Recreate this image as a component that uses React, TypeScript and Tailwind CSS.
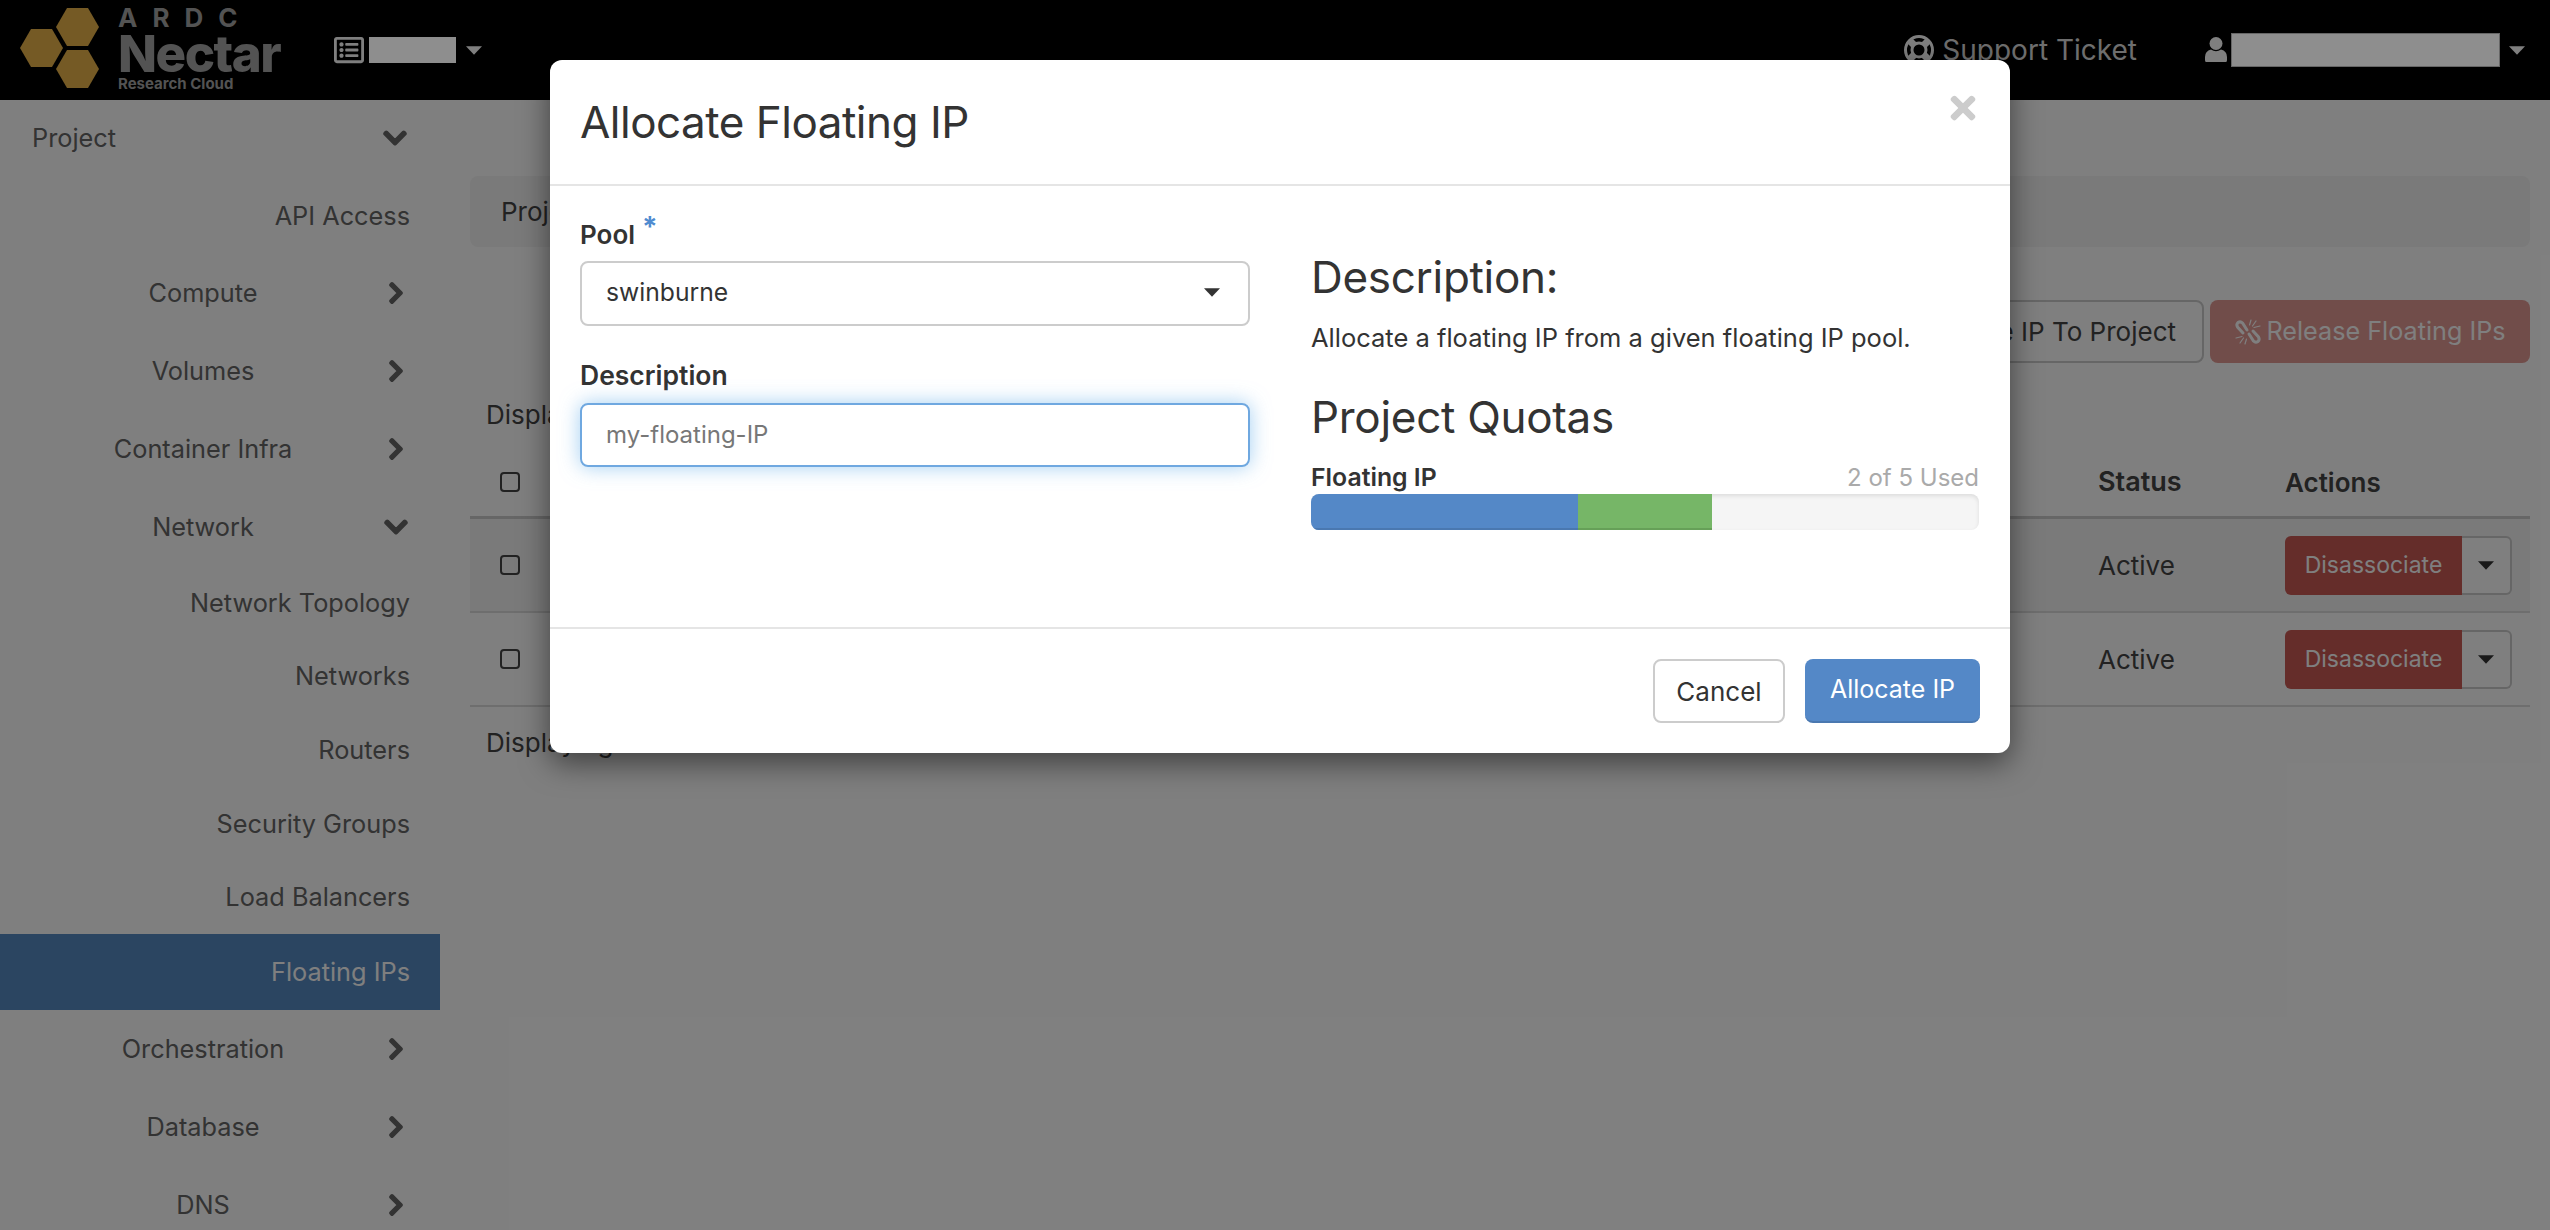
import { FaChevronDown, FaChevronRight, FaRegListAlt, FaTimes } from 'react-icons/fa';

type NavItem = { label: string; h: string; arrow?: 'down' | 'right'; active?: boolean };

const NAV: NavItem[] = [
  { label: 'API Access', h: 'h-[76px]' },
  { label: 'Compute', h: 'h-[78px]', arrow: 'right' },
  { label: 'Volumes', h: 'h-[78px]', arrow: 'right' },
  { label: 'Container Infra', h: 'h-[78px]', arrow: 'right' },
  { label: 'Network', h: 'h-[78px]', arrow: 'down' },
  { label: 'Network Topology', h: 'h-[73.6px]' },
  { label: 'Networks', h: 'h-[73.6px]' },
  { label: 'Routers', h: 'h-[73.6px]' },
  { label: 'Security Groups', h: 'h-[73.6px]' },
  { label: 'Load Balancers', h: 'h-[73.6px]' },
  { label: 'Floating IPs', h: 'h-[76px]', active: true },
  { label: 'Orchestration', h: 'h-[78px]', arrow: 'right' },
  { label: 'Database', h: 'h-[78px]', arrow: 'right' },
  { label: 'DNS', h: 'h-[78px]', arrow: 'right' },
];

function Caret({ className }: { className: string }) {
  return (
    <svg viewBox="0 0 22 12" className={className} fill="currentColor">
      <polygon points="0,0 22,0 11,12" />
    </svg>
  );
}

function LifeRing() {
  return (
    <svg width="30" height="30" viewBox="0 0 30 30" fill="none" stroke="#fff">
      <circle cx="15" cy="15" r="13.5" strokeWidth="3" />
      <circle cx="15" cy="15" r="7" strokeWidth="3" />
      <g strokeWidth="7">
        <path d="M6 6 L10 10" />
        <path d="M24 6 L20 10" />
        <path d="M6 24 L10 20" />
        <path d="M24 24 L20 20" />
      </g>
    </svg>
  );
}

function UserIcon() {
  return (
    <svg width="22" height="26" viewBox="0 0 22 26" fill="#fff">
      <ellipse cx="11" cy="6.5" rx="6.5" ry="6.5" />
      <path d="M1 25 Q0 25 0 23 L0 20 Q0 14 6 12.5 Q11 16 16 12.5 Q22 14 22 20 L22 23 Q22 25 21 25 Z" />
    </svg>
  );
}

function BrokenLink() {
  return (
    <svg width="28" height="28" viewBox="0 0 28 28" fill="none" stroke="currentColor" strokeLinecap="round">
      <path d="M13 12 L8.5 5 Q6.5 3 4 4.5 Q2 6.5 3.5 9 L9 15" strokeWidth="3" />
      <path d="M15 16 L19.5 23 Q21.5 25 24 23.5 Q26 21.5 24.5 19 L19 13" strokeWidth="3" />
      <g strokeWidth="1.2">
        <path d="M17 2 L15.5 7" />
        <path d="M22 3 L18.5 8" />
        <path d="M26 8 L20 9.5" />
        <path d="M2 20 L8 18.5" />
        <path d="M6 25 L9.5 20" />
        <path d="M11 26 L12.5 21" />
      </g>
    </svg>
  );
}

function Logo() {
  return (
    <div className="flex items-start">
      <svg width="80" height="80" viewBox="0 0 80 80" className="ml-[20px] mt-[8px] shrink-0" fill="#eab44a">
        <polygon points="36,19 47,0 68,0 79,19 68,38 47,38" />
        <polygon points="0,40 11,21 32,21 43,40 32,59 11,59" />
        <polygon points="36,61 47,42 68,42 79,61 68,80 47,80" />
      </svg>
      <div className="ml-[18px] flex flex-col text-[#a6a6a6]">
        <div className="mt-[5px] h-[26px] text-[26px] font-bold leading-[26px] tracking-[15px]">ARDC</div>
        <div className="h-[46px] text-[51px] font-extrabold leading-[46px] tracking-[-1.5px]">Nectar</div>
        <div className="text-[15px] font-bold leading-[14px]">Research Cloud</div>
      </div>
    </div>
  );
}

function Navbar() {
  return (
    <div className="flex h-[100px] items-center bg-black">
      <div className="h-[100px] w-[334px] shrink-0">
        <Logo />
      </div>
      <FaRegListAlt className="text-[30px] text-white" />
      <div className="relative z-10 ml-[5px] h-[26px] w-[87px] bg-[#8e8e8e]" />
      <Caret className="ml-[10px] h-[9px] w-[16px] text-white" />
      <div className="flex-1" />
      <LifeRing />
      <span className="ml-[8px] text-[28px] text-[#dcdcdc]">Support Ticket</span>
      <div className="ml-[68px]">
        <UserIcon />
      </div>
      <div className="relative z-10 ml-[4px] h-[34px] w-[269px] border border-[#666] bg-[#8e8e8e]" />
      <Caret className="ml-[9px] mr-[25px] h-[9px] w-[16px] text-white" />
    </div>
  );
}

function Sidebar() {
  return (
    <div className="w-[440px] shrink-0 text-[25.3px] text-[#666]">
      <div className="flex h-[76px] items-center justify-between pl-[32px] pr-[32px]">
        <span>Project</span>
        <FaChevronDown className="text-[26px]" stroke="currentColor" strokeWidth={30} />
      </div>
      <div className="h-[2px]" />
      {NAV.map((item) => (
        <div key={item.label} className={item.h + ' flex items-center ' + (item.active ? 'bg-[#568ac2] text-white' : '')}>
          {item.arrow ? (
            <>
              <span className="w-[406px] text-center">{item.label}</span>
              <span className="-ml-[18px] flex w-[16px] justify-center">
                {item.arrow === 'down' ? (
                  <FaChevronDown className="shrink-0 text-[26px]" stroke="currentColor" strokeWidth={30} />
                ) : (
                  <FaChevronRight className="shrink-0 text-[24px]" stroke="currentColor" strokeWidth={30} />
                )}
              </span>
            </>
          ) : (
            <span className="w-[410px] text-right">{item.label}</span>
          )}
        </div>
      ))}
    </div>
  );
}

function Checkbox() {
  return <div className="h-[20px] w-[20px] rounded-[4px] border-2 border-[#444]" />;
}

function Row({ shaded }: { shaded?: boolean }) {
  return (
    <div className={'flex h-[94px] items-center border-b-2 border-[#ddd] ' + (shaded ? 'bg-[#f5f5f5]' : '')}>
      <div className="flex-1 pl-[30px]">
        <Checkbox />
      </div>
      <div className="w-[187px] text-[#444]">Active</div>
      <div className="flex w-[245px] items-center">
        <div className="flex h-[59px] w-[177px] items-center justify-center rounded-l-[6px] bg-[#ca5a54] text-[23px] text-white">
          Disassociate
        </div>
        <div className="flex h-[59px] w-[50px] items-center justify-center rounded-r-[6px] border-2 border-l-0 border-[#ccc] bg-white">
          <Caret className="h-[9px] w-[16px] text-[#333]" />
        </div>
      </div>
    </div>
  );
}

function Content() {
  return (
    <div className="w-[2090px] pl-[30px] text-[26px]">
      <div className="mt-[76px] flex h-[71px] w-[2060px] items-center rounded-[8px] bg-[#f5f5f5] pl-[31px] text-[#444]">Project</div>
      <div className="mt-[53px] flex w-[2060px] justify-end gap-[6px]">
        <div className="flex h-[63px] items-center rounded-[8px] border-2 border-[#ccc] bg-white px-[26px] text-[#444]">Allocate IP To Project</div>
        <div className="flex h-[63px] w-[320px] items-center justify-center gap-[4px] rounded-[8px] bg-[#e39a94] text-[25.2px] text-white">
          <BrokenLink />
          <span>Release Floating IPs</span>
        </div>
      </div>
      <div className="mt-[36px] pl-[16px] leading-[32px] text-[#444]">Displaying 2 items</div>
      <div className="mt-[17px] flex h-[71px] w-[2060px] items-center border-b-[3px] border-[#ccc] font-semibold text-[#444]">
        <div className="flex-1 pl-[30px]">
          <Checkbox />
        </div>
        <div className="w-[187px] text-[27px]">Status</div>
        <div className="w-[245px]">Actions</div>
      </div>
      <div className="w-[2060px]">
        <Row shaded />
        <Row />
      </div>
      <div className="mt-[20px] pl-[16px] leading-[32px] text-[#444]">Displaying 2 items</div>
    </div>
  );
}

function AllocateModal() {
  return (
    <div className="absolute left-[550px] top-[60px] z-20 flex h-[693px] w-[1460px] flex-col rounded-[12px] bg-white text-[#333] shadow-[0_10px_30px_rgba(0,0,0,0.5)]">
      <div className="relative flex h-[126px] items-center border-b-2 border-[#e5e5e5] pl-[30px]">
        <h4 className="text-[44px] leading-none tracking-[-0.5px]">Allocate Floating IP</h4>
        <FaTimes className="absolute right-[29px] top-[30px] text-[36px] text-[#ccc]" />
      </div>
      <div className="flex h-[443px] border-b-2 border-[#e5e5e5] pl-[30px] pr-[31px]">
        <div className="w-[670px] shrink-0">
          <div className="mt-[32px] flex h-[32px] items-center text-[26px] font-semibold">
            Pool
            <span className="-mt-[14px] ml-[7px] text-[28px] font-bold leading-none text-[#4f8bd0]">*</span>
          </div>
          <div className="mt-[11px] flex h-[65px] items-center justify-between rounded-[8px] border-2 border-[#ccc] pb-[2px] pl-[24px] pr-[28px] text-[24.7px]">
            swinburne
            <Caret className="h-[9px] w-[16px] text-[#333]" />
          </div>
          <div className="mt-[34px] flex h-[32px] items-center text-[26.5px] font-semibold">Description</div>
          <input
            placeholder="my-floating-IP"
            readOnly
            className="mt-[11px] h-[64px] w-full rounded-[8px] border-2 border-[#6fa8e0] pb-[2px] pl-[24px] text-[24px] shadow-[0_0_20px_rgba(102,175,233,0.6)] outline-none placeholder:text-[#777]"
          />
        </div>
        <div className="ml-[61px] flex-1">
          <h3 className="mt-[66px] text-[44px] leading-[50px] tracking-[-0.3px]">Description:</h3>
          <p className="mt-[20px] text-[25.5px] leading-[32px]">Allocate a floating IP from a given floating IP pool.</p>
          <h3 className="mt-[38px] text-[44px] leading-[50px] tracking-[-0.3px]">Project Quotas</h3>
          <div className="mt-[20px] flex h-[32px] items-center justify-between">
            <span className="text-[24.8px] font-semibold">Floating IP</span>
            <span className="text-[24px] text-[#aaa]">2 of 5 Used</span>
          </div>
          <div className="flex h-[36px] overflow-hidden rounded-[8px] bg-[#f5f5f5] shadow-[inset_0_2px_4px_rgba(0,0,0,0.1)]">
            <div className="w-[267px] border-b-2 border-[#4a78b0] bg-[#5488c7]" />
            <div className="w-[134px] border-b-2 border-[#66a058] bg-[#76b667]" />
          </div>
        </div>
      </div>
      <div className="flex flex-1 items-start justify-end gap-[20px] pr-[30px] pt-[30px] text-[26px]">
        <div className="flex h-[64px] w-[132px] items-center justify-center rounded-[8px] border-2 border-[#ccc] bg-white">Cancel</div>
        <div className="flex h-[64px] w-[175px] items-center justify-center rounded-[8px] border-b-2 border-[#4a78b0] bg-[#5488c7] text-[25px] text-white">Allocate IP</div>
      </div>
    </div>
  );
}

export default function App() {
  return (
    <div className="relative h-[1230px] w-[2550px] overflow-hidden bg-white font-['Inter',sans-serif]">
      <Navbar />
      <div className="flex">
        <Sidebar />
        <Content />
      </div>
      <div className="absolute inset-0 bg-black/50" />
      <AllocateModal />
    </div>
  );
}
